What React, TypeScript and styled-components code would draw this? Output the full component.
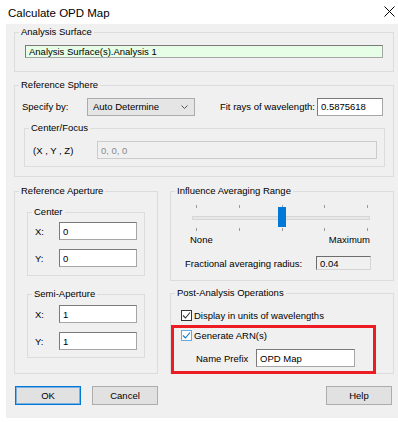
import React from "react";
import styled, { createGlobalStyle } from "styled-components";

const Global = createGlobalStyle`
  html, body { margin: 0; padding: 0; background: #ffffff; }
  body {
    font-family: "Liberation Sans", Arial, sans-serif;
    font-size: 9.5px;
    color: #000;
  }
  * { box-sizing: border-box; }
`;

const Window = styled.div`
  width: 398px;
  height: 422px;
  background: #ffffff;
  display: flex;
  flex-direction: column;
  overflow: hidden;
`;

const TitleBar = styled.div`
  height: 24px;
  flex: none;
  display: flex;
  align-items: center;
  justify-content: space-between;
  padding: 1px 3px 0 8px;
  font-size: 11.5px;
  color: #000;
`;

const CloseIcon = styled.svg`
  width: 11px;
  height: 11px;
  margin-bottom: 2px;
`;

const Body = styled.div`
  margin-left: 6px;
  width: 392px;
  height: 394px;
  flex: none;
  background: #f0f0f0;
  padding: 8px 4px 8px 8px;
  display: flex;
  flex-direction: column;
`;

const Box = styled.div<{ $pl: number; $pr: number; $pb: number; $mt?: number; $ml?: number; $mr?: number; $grow?: boolean }>`
  --pl: ${(p) => p.$pl}px;
  border: 1px solid #dcdcdc;
  padding: 0 ${(p) => p.$pr}px ${(p) => p.$pb}px var(--pl);
  margin: ${(p) => p.$mt ?? 0}px ${(p) => p.$mr ?? 0}px 0 ${(p) => p.$ml ?? 0}px;
  display: flex;
  flex-direction: column;
  flex: ${(p) => (p.$grow ? "1 1 auto" : "none")};
  min-width: 0;
`;

const Caption = styled.div<{ $gap: number }>`
  align-self: flex-start;
  margin: -7px 0 ${(p) => p.$gap}px calc(4px - var(--pl));
  padding: 0 2px;
  height: 12px;
  line-height: 12px;
  background: #f0f0f0;
  white-space: nowrap;
`;

const Row = styled.div<{ $h?: number; $mt?: number; $pr?: number }>`
  display: flex;
  align-items: center;
  height: ${(p) => p.$h ?? 18}px;
  margin-top: ${(p) => p.$mt ?? 0}px;
  padding-right: ${(p) => p.$pr ?? 0}px;
  white-space: nowrap;
`;

const Label = styled.span<{ $w?: number; $ml?: number }>`
  flex: none;
  width: ${(p) => (p.$w ? `${p.$w}px` : "auto")};
  margin-left: ${(p) => p.$ml ?? 0}px;
  white-space: nowrap;
`;

type Tone = "white" | "green" | "disabled" | "static";

const Field = styled.input<{ $tone?: Tone; $w?: number; $h?: number; $mr?: number }>`
  height: ${(p) => p.$h ?? 18}px;
  width: ${(p) => (p.$w ? `${p.$w}px` : "auto")};
  flex: ${(p) => (p.$w ? "none" : "1 1 0")};
  min-width: 0;
  margin: 0 ${(p) => p.$mr ?? 0}px 0 0;
  padding: 0 3px;
  font: inherit;
  color: ${(p) => (p.$tone === "disabled" ? "#8a8a8a" : "#000")};
  background: ${(p) =>
    p.$tone === "green" ? "#e6fde6" : p.$tone === "disabled" || p.$tone === "static" ? "#f0f0f0" : "#ffffff"};
  border: 1px solid;
  border-color: ${(p) =>
    p.$tone === "disabled"
      ? "#cccccc"
      : p.$tone === "static"
      ? "#6d6d6d #d4d4d4 #d4d4d4 #6d6d6d"
      : "#7a7a7a #a6a6a6 #a6a6a6 #7a7a7a"};
  border-radius: 0;
  outline: none;
`;

const Select = styled.div`
  width: 108px;
  height: 18px;
  flex: none;
  display: flex;
  align-items: center;
  justify-content: space-between;
  padding: 0 6px 0 5px;
  background: #e5e5e5;
  border: 1px solid #acacac;
`;

const Chevron = styled.svg`
  width: 7px;
  height: 4px;
`;

const Spacer = styled.div`
  flex: 1;
`;

const FitLabel = styled.span`
  margin-right: 2px;
`;

const LowerRow = styled.div`
  display: flex;
  gap: 12px;
  margin-top: 14px;
  align-items: stretch;
`;

const LeftCol = styled.div`
  width: 144px;
  flex: none;
  display: flex;
  flex-direction: column;
`;

const RightCol = styled.div`
  flex: 1;
  display: flex;
  flex-direction: column;
  min-width: 0;
`;

const Slider = styled.div`
  margin-left: 5px;
  height: 26px;
  display: flex;
  flex-direction: column;
`;

const Ticks = styled.div`
  height: 3px;
  flex: none;
  display: flex;
  justify-content: space-between;
  padding: 0 4px 0 6px;
`;

const Tick = styled.span`
  width: 1px;
  height: 3px;
  background: #9a9a9a;
`;

const TrackArea = styled.div`
  position: relative;
  height: 20px;
  flex: none;
  display: flex;
  align-items: center;
  padding: 0 2px;
`;

const Track = styled.div`
  flex: 1;
  height: 4px;
  background: #e7e7e7;
  border: 1px solid #d6d6d6;
`;

const Thumb = styled.div`
  position: absolute;
  top: -1px;
  width: 8px;
  height: 20px;
  background: #0078d7;
`;

const RangeLabels = styled.div`
  display: flex;
  justify-content: space-between;
  margin: 3px 0 0 5px;
  padding-right: 2px;
  height: 12px;
  line-height: 12px;
`;

const CheckRow = styled.div<{ $mt?: number }>`
  display: flex;
  align-items: center;
  gap: 2px;
  height: 13px;
  margin-top: ${(p) => p.$mt ?? 0}px;
  white-space: nowrap;
`;

const CheckBox = styled.span<{ $focus?: boolean }>`
  width: 11px;
  height: 11px;
  flex: none;
  display: flex;
  align-items: center;
  justify-content: center;
  background: #ffffff;
  border: 1px solid ${(p) => (p.$focus ? "#6aa8e0" : "#333333")};
`;

const CheckMark = styled.svg`
  width: 9px;
  height: 9px;
`;

const Highlight = styled.div`
  width: 205px;
  margin: 3px 0 -1px -10px;
  border: 3px solid #ed1c24;
  padding: 1px 0 4px 7px;
  display: flex;
  flex-direction: column;
`;

const ButtonRow = styled.div`
  display: flex;
  align-items: center;
  margin-top: 12px;
  padding: 0 2px 0 1px;
  gap: 11px;
`;

const Button = styled.button<{ $primary?: boolean; $push?: boolean }>`
  width: 66px;
  height: 19px;
  margin: 0 0 0 ${(p) => (p.$push ? "auto" : "0")};
  padding: 0;
  font: inherit;
  font-size: 9.5px;
  color: #000;
  background: #e1e1e1;
  border: 1px solid ${(p) => (p.$primary ? "#0078d7" : "#adadad")};
  box-shadow: ${(p) => (p.$primary ? "inset 0 0 0 1px rgba(0,120,215,0.45)" : "none")};
  border-radius: 0;
`;

function Check({ focus }: { focus?: boolean }) {
  return (
    <CheckBox $focus={focus}>
      <CheckMark viewBox="0 0 9 9">
        <polyline
          points="1,4.5 3.5,7 8,1.5"
          fill="none"
          stroke={focus ? "#0078d7" : "#333333"}
          strokeWidth="1.1"
        />
      </CheckMark>
    </CheckBox>
  );
}

export default function App() {
  const ticks = 5;
  const value = 0.5;
  const thumbLeft = 6 + value * 171 - 4;
  return (
    <>
      <Global />
      <Window>
        <TitleBar>
          <span>Calculate OPD Map</span>
          <CloseIcon viewBox="0 0 11 11">
            <path d="M0.5 0.5 L10.5 10.5 M10.5 0.5 L0.5 10.5" stroke="#000" strokeWidth="1" fill="none" />
          </CloseIcon>
        </TitleBar>
        <Body>
          <Box $pl={10} $pr={10} $pb={13}>
            <Caption $gap={7}>Analysis Surface</Caption>
            <Field $tone="green" readOnly value="Analysis Surface(s).Analysis 1" />
          </Box>

          <Box $pl={7} $pr={8} $pb={9} $mt={13}>
            <Caption $gap={6}>Reference Sphere</Caption>
            <Row $h={19} $pr={2}>
              <Label $w={65}>Specify by:</Label>
              <Select>
                <span>Auto Determine</span>
                <Chevron viewBox="0 0 7 4">
                  <polyline points="0.5,0.5 3.5,3.5 6.5,0.5" fill="none" stroke="#555" strokeWidth="1" />
                </Chevron>
              </Select>
              <Spacer />
              <FitLabel>Fit rays of wavelength:</FitLabel>
              <Field $tone="white" $w={66} readOnly value="0.5875618" />
            </Row>
            <Box $pl={8} $pr={7} $pb={7} $mt={12} $ml={2}>
              <Caption $gap={7}>Center/Focus</Caption>
              <Row>
                <Label $w={64}>(X , Y , Z)</Label>
                <Field $tone="disabled" readOnly value="0, 0, 0" />
              </Row>
            </Box>
          </Box>

          <LowerRow>
            <LeftCol>
              <Box $pl={12} $pr={12} $pb={0} $grow>
                <Caption $gap={15}>Reference Aperture</Caption>
                <Box $pl={7} $pr={7} $pb={8}>
                  <Caption $gap={4}>Center</Caption>
                  <Row>
                    <Label $w={24}>X:</Label>
                    <Field $tone="white" readOnly value="0" />
                  </Row>
                  <Row $mt={9}>
                    <Label $w={24}>Y:</Label>
                    <Field $tone="white" readOnly value="0" />
                  </Row>
                </Box>
                <Box $pl={7} $pr={7} $pb={7} $mt={18}>
                  <Caption $gap={5}>Semi-Aperture</Caption>
                  <Row>
                    <Label $w={24}>X:</Label>
                    <Field $tone="white" readOnly value="1" />
                  </Row>
                  <Row $mt={9}>
                    <Label $w={24}>Y:</Label>
                    <Field $tone="white" readOnly value="1" />
                  </Row>
                </Box>
              </Box>
            </LeftCol>

            <RightCol>
              <Box $pl={14} $pr={21} $pb={10}>
                <Caption $gap={8}>Influence Averaging Range</Caption>
                <Slider>
                  <Ticks>
                    {Array.from({ length: ticks }).map((_, i) => (
                      <Tick key={i} />
                    ))}
                  </Ticks>
                  <TrackArea>
                    <Track />
                    <Thumb style={{ left: `${thumbLeft}px` }} />
                  </TrackArea>
                  <Ticks>
                    {Array.from({ length: ticks }).map((_, i) => (
                      <Tick key={i} />
                    ))}
                  </Ticks>
                </Slider>
                <RangeLabels>
                  <span>None</span>
                  <span>Maximum</span>
                </RangeLabels>
                <Row $h={14} $mt={10}>
                  <Label>Fractional averaging radius:</Label>
                  <Spacer />
                  <Field $tone="static" $w={55} $h={14} $mr={1} readOnly value="0.04" />
                </Row>
              </Box>

              <Box $pl={10} $pr={10} $pb={0} $mt={12} $grow>
                <Caption $gap={10}>Post-Analysis Operations</Caption>
                <CheckRow>
                  <Check />
                  <span>Display in units of wavelengths</span>
                </CheckRow>
                <Highlight>
                  <CheckRow>
                    <Check focus />
                    <span>Generate ARN(s)</span>
                  </CheckRow>
                  <Row $mt={7}>
                    <Label $w={60} $ml={15}>Name Prefix</Label>
                    <Field $tone="white" $w={99} readOnly value="OPD Map" />
                  </Row>
                </Highlight>
              </Box>
            </RightCol>
          </LowerRow>

          <ButtonRow>
            <Button $primary>OK</Button>
            <Button>Cancel</Button>
            <Button $push>Help</Button>
          </ButtonRow>
        </Body>
      </Window>
    </>
  );
}
